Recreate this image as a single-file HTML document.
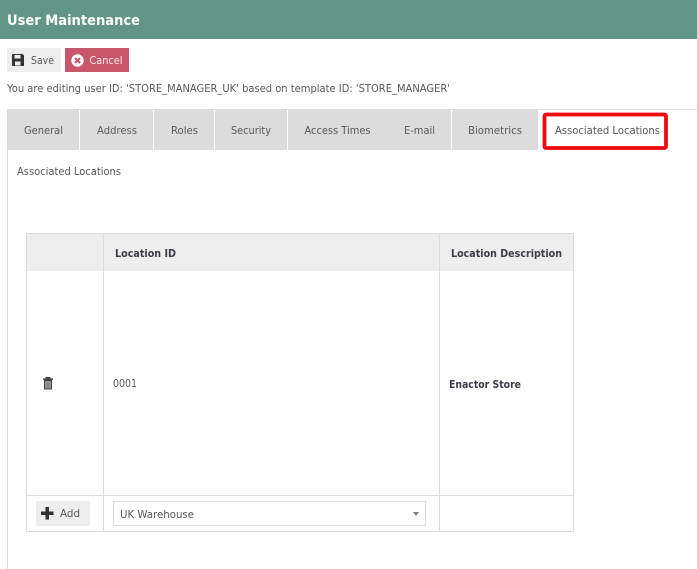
<!DOCTYPE html>
<html><head><meta charset="utf-8"><style>
html,body{margin:0;padding:0;background:#fff;width:697px;height:569px;overflow:hidden}
svg{display:block}
text{font-family:"DejaVu Sans","Liberation Sans",sans-serif;font-size:11px;fill:#585858}
</style></head><body>
<svg width="697" height="569" viewBox="0 0 697 569" xmlns="http://www.w3.org/2000/svg">
<rect x="0" y="0" width="697" height="39" fill="#619585"/>
<text x="7" y="25" textLength="133" lengthAdjust="spacingAndGlyphs" style="font-size:14px;font-weight:bold;fill:#fff">User Maintenance</text>

<rect x="7" y="48" width="54" height="24" fill="#eeeeee"/>
<path d="M12 54h10.500l1.500 1.500V66h-12z" fill="#333"/>
<rect x="14.500" y="55" width="6" height="3.500" fill="#eee"/>
<rect x="15" y="61.500" width="5.500" height="4" fill="#eee"/>
<text x="31" y="64" textLength="23" lengthAdjust="spacingAndGlyphs">Save</text>

<rect x="65" y="48" width="64" height="24" fill="#c9566a"/>
<circle cx="77.500" cy="60.500" r="6.200" fill="#fff"/>
<path d="M75 58l5 5M80 58l-5 5" stroke="#c9566a" stroke-width="2" fill="none"/>
<text x="89.500" y="64" textLength="33" lengthAdjust="spacingAndGlyphs" style="fill:#fbeef0">Cancel</text>

<text x="7" y="92" textLength="443" lengthAdjust="spacingAndGlyphs">You are editing user ID: 'STORE_MANAGER_UK' based on template ID: 'STORE_MANAGER'</text>

<rect x="7" y="109" width="690" height="1" fill="#dddddd"/>
<rect x="7" y="109" width="531" height="41" fill="#dcdcdc"/>
<rect x="79" y="110" width="1" height="40" fill="#fff"/>
<rect x="153" y="110" width="1" height="40" fill="#fff"/>
<rect x="214" y="110" width="1" height="40" fill="#fff"/>
<rect x="287" y="110" width="1" height="40" fill="#fff"/>
<rect x="451" y="110" width="1" height="40" fill="#fff"/>
<rect x="7" y="150" width="1" height="419" fill="#dddddd"/>

<text x="24" y="134" textLength="39" lengthAdjust="spacingAndGlyphs">General</text>
<text x="97" y="134" textLength="40" lengthAdjust="spacingAndGlyphs">Address</text>
<text x="171" y="134" textLength="27" lengthAdjust="spacingAndGlyphs">Roles</text>
<text x="231" y="134" textLength="40" lengthAdjust="spacingAndGlyphs">Security</text>
<text x="304.500" y="134" textLength="66" lengthAdjust="spacingAndGlyphs">Access Times</text>
<text x="404" y="134" textLength="31" lengthAdjust="spacingAndGlyphs">E-mail</text>
<text x="468" y="134" textLength="54" lengthAdjust="spacingAndGlyphs">Biometrics</text>
<text x="555" y="134" textLength="105" lengthAdjust="spacingAndGlyphs">Associated Locations</text>
<rect x="544.500" y="114.500" width="121.500" height="33.500" rx="1.500" fill="none" stroke="#ee0a10" stroke-width="3.800"/>

<text x="17" y="175" textLength="104" lengthAdjust="spacingAndGlyphs">Associated Locations</text>

<rect x="27" y="234" width="546" height="37" fill="#eeeeee"/>
<g fill="#dddddd">
<rect x="26" y="233" width="548" height="1"/>
<rect x="26" y="233" width="1" height="299"/>
<rect x="573" y="233" width="1" height="299"/>
<rect x="103" y="233" width="1" height="299"/>
<rect x="439" y="233" width="1" height="299"/>
<rect x="26" y="495" width="548" height="1"/>
<rect x="26" y="531" width="548" height="1"/>
</g>
<text x="115" y="257" textLength="61" lengthAdjust="spacingAndGlyphs" style="font-weight:bold;fill:#3c3c46">Location ID</text>
<text x="451" y="257" textLength="111" lengthAdjust="spacingAndGlyphs" style="font-weight:bold;fill:#3c3c46">Location Description</text>

<path d="M43 378.500h10v1.500H43zM45.500 377h5v1.500h-5z" fill="#444"/>
<path d="M44 380h8v9.500h-8z" fill="#444"/>
<path d="M46 381v7.500M48 381v7.500M50 381v7.500" stroke="#fff" stroke-width="0.800" fill="none"/>
<text x="113" y="387" textLength="24" lengthAdjust="spacingAndGlyphs">0001</text>
<text x="449" y="388" textLength="72" lengthAdjust="spacingAndGlyphs" style="font-weight:bold;fill:#3c3c46">Enactor Store</text>

<rect x="36" y="501" width="54" height="25" fill="#eeeeee"/>
<path d="M45.500 507h3.500v4.500h4.500v3.500H49v4.500h-3.500V515H41v-3.500h4.500z" fill="#333"/>
<text x="60" y="517" textLength="20" lengthAdjust="spacingAndGlyphs">Add</text>

<rect x="113.500" y="501.500" width="312" height="24" fill="#fff" stroke="#dddddd"/>
<text x="120" y="518" textLength="74" lengthAdjust="spacingAndGlyphs">UK Warehouse</text>
<path d="M413 512h6l-3 4z" fill="#808080"/>
</svg>
</body></html>
